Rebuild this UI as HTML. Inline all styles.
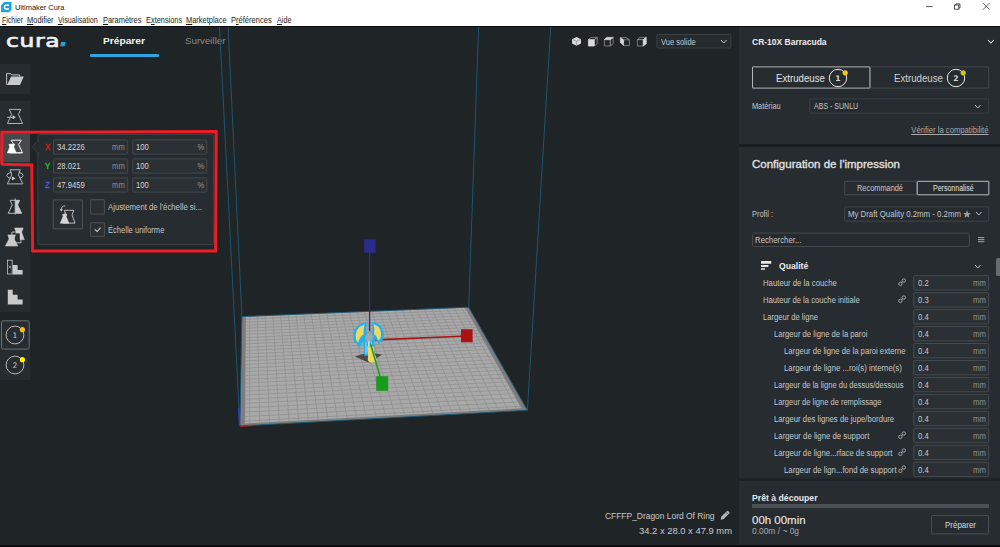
<!DOCTYPE html><html lang="fr"><head><meta charset="utf-8"><title>Ultimaker Cura</title><style>
*{margin:0;padding:0;box-sizing:border-box}
html,body{width:1000px;height:547px;overflow:hidden;background:#1f2427}
body{position:relative;font-family:"Liberation Sans",sans-serif;}
.t{position:absolute;white-space:nowrap;display:inline-block}
.b{position:absolute}
svg{position:absolute;overflow:visible}
u{text-decoration:underline;text-underline-offset:1px;text-decoration-thickness:0.6px}
</style></head><body>
<div class="b" style="left:0.00px;top:0.00px;width:1000.00px;height:26.30px;background:#ffffff;"></div>
<div class="b" style="left:0.00px;top:26.30px;width:1000.00px;height:0.90px;background:#0c0e10;"></div>
<svg style="left:0.8px;top:1.7px" width="10.5" height="10.3" viewBox="0 0 21 20.6"><path d="M6.4 0H21V15.6L16.4 20.6H2.4Q0 20.6 0 18.2V6.6Z" fill="#1da1e4"/><path d="M16.2 6.7H10Q6.9 6.7 6.9 9.8V10.8Q6.9 13.9 10 13.9H16.2" fill="none" stroke="#fff" stroke-width="2.9"/></svg>
<span class="t" style="top:4.00px;font-size:7.9px;line-height:7.9px;color:#1a1a1a;left:14.60px;transform-origin:left center;transform:scaleX(0.9397);">Ultimaker Cura</span>
<svg style="left:920px;top:0" width="80" height="14" viewBox="0 0 80 14"><g stroke="#222" stroke-width="0.75" fill="none"><path d="M6 6.6H12.6"/><rect x="34.6" y="5" width="4.2" height="4.2"/><path d="M35.8 5V3.9H40V8H38.8"/><path d="M63 3.2L69.4 9.6M69.4 3.2L63 9.6"/></g></svg>
<span class="t" style="top:17.00px;font-size:8.2px;line-height:8.2px;color:#1c1c1c;left:2.00px;transform-origin:left center;transform:scaleX(0.8535);"><u>F</u>ichier</span>
<span class="t" style="top:17.00px;font-size:8.2px;line-height:8.2px;color:#1c1c1c;left:27.30px;transform-origin:left center;transform:scaleX(0.9120);"><u>M</u>odifier</span>
<span class="t" style="top:17.00px;font-size:8.2px;line-height:8.2px;color:#1c1c1c;left:58.30px;transform-origin:left center;transform:scaleX(0.8651);"><u>V</u>isualisation</span>
<span class="t" style="top:17.00px;font-size:8.2px;line-height:8.2px;color:#1c1c1c;left:102.50px;transform-origin:left center;transform:scaleX(0.9084);"><u>P</u>aramètres</span>
<span class="t" style="top:17.00px;font-size:8.2px;line-height:8.2px;color:#1c1c1c;left:145.50px;transform-origin:left center;transform:scaleX(0.9025);">E<u>x</u>tensions</span>
<span class="t" style="top:17.00px;font-size:8.2px;line-height:8.2px;color:#1c1c1c;left:185.70px;transform-origin:left center;transform:scaleX(0.9090);"><u>M</u>arketplace</span>
<span class="t" style="top:17.00px;font-size:8.2px;line-height:8.2px;color:#1c1c1c;left:231.00px;transform-origin:left center;transform:scaleX(0.9228);">P<u>r</u>éférences</span>
<span class="t" style="top:17.00px;font-size:8.2px;line-height:8.2px;color:#1c1c1c;left:276.60px;transform-origin:left center;transform:scaleX(0.8774);"><u>A</u>ide</span>
<span class="t" style="left:5.7px;top:29.4px;font-family:'DejaVu Sans',sans-serif;font-weight:400;font-size:17.5px;line-height:24px;color:#f1f1f1;-webkit-text-stroke:0.65px #f1f1f1;letter-spacing:0.5px;transform-origin:left center;transform:scaleX(1.335)">cura</span>
<svg style="left:60px;top:42px" width="6" height="5" viewBox="0 0 6 5"><path d="M1.2 0H5.6L4.6 4.3H0.2Z" fill="#1fa3e6"/></svg>
<span class="t" style="top:36.00px;font-size:9.6px;line-height:9.6px;color:#f4f4f4;font-weight:700;left:103.00px;transform-origin:left center;transform:scaleX(1.0635);">Préparer</span>
<div class="b" style="left:89.50px;top:54.30px;width:69.00px;height:2.40px;background:#2fa2e2;border-radius:1px;"></div>
<span class="t" style="top:36.00px;font-size:9.6px;line-height:9.6px;color:#868a8d;left:184.70px;transform-origin:left center;transform:scaleX(1.0121);">Surveiller</span>
<svg style="left:0;top:0" width="1000" height="547" viewBox="0 0 1000 547"><path d="M219.5 27.0L239.9 426.0" stroke="#1b5a76" stroke-width="0.9" fill="none" /><path d="M228.1 27.0L241.9 316.6" stroke="#1b5a76" stroke-width="0.9" fill="none" /><path d="M478.6 27.0L468.7 307.2" stroke="#1b5a76" stroke-width="0.9" fill="none" /><path d="M550.7 27.0L527.4 410.3" stroke="#1b5a76" stroke-width="0.9" fill="none" /><path d="M241.9 316.6L468.7 307.2L527.4 410.3L239.9 426.0Z" fill="#7d7d7e"/><path d="M245.9 316.8L465.1 307.7L521.4 408.3L245.0 423.4Z" fill="#a9a9aa"/><path d="M249.7 316.6L249.8 423.1M245.8 319.3L466.5 310.1M257.4 316.3L259.7 422.6M245.8 322.2L468.0 312.9M265.2 316.0L269.5 422.0M245.8 325.2L469.6 315.7M272.9 315.7L279.3 421.5M245.8 328.2L471.2 318.5M280.6 315.3L289.1 421.0M245.7 331.2L472.8 321.4M288.3 315.0L298.8 420.4M245.7 334.3L474.5 324.4M296.0 314.7L308.5 419.9M245.7 337.5L476.1 327.3M303.7 314.4L318.2 419.4M245.7 340.7L477.8 330.4M311.3 314.1L327.9 418.9M245.6 343.9L479.5 333.4M319.0 313.7L337.6 418.3M245.6 347.2L481.3 336.6M326.6 313.4L347.2 417.8M245.6 350.5L483.0 339.7M334.2 313.1L356.8 417.3M245.6 353.9L484.8 342.9M341.8 312.8L366.4 416.8M245.5 357.4L486.7 346.2M349.4 312.5L376.0 416.2M245.5 360.9L488.5 349.5M357.0 312.2L385.6 415.7M245.5 364.4L490.4 352.9M364.5 311.9L395.1 415.2M245.4 368.1L492.3 356.3M372.1 311.5L404.6 414.7M245.4 371.7L494.3 359.8M379.6 311.2L414.1 414.2M245.4 375.5L496.2 363.3M387.1 310.9L423.5 413.7M245.3 379.3L498.2 366.9M394.6 310.6L433.0 413.2M245.3 383.1L500.3 370.5M402.1 310.3L442.4 412.6M245.3 387.1L502.4 374.2M409.6 310.0L451.8 412.1M245.2 391.1L504.5 378.0M417.0 309.7L461.1 411.6M245.2 395.1L506.6 381.8M424.5 309.4L470.5 411.1M245.2 399.3L508.8 385.7M431.9 309.1L479.8 410.6M245.1 403.5L511.0 389.7M439.3 308.8L489.1 410.1M245.1 407.8L513.3 393.7M446.7 308.4L498.4 409.6M245.1 412.1L515.6 397.8M454.1 308.1L507.7 409.1M245.0 416.6L517.9 402.0M461.5 307.8L516.9 408.6M245.0 421.1L520.3 406.2" stroke="#8f8f90" stroke-width="0.75" fill="none"/><path d="M241.9 316.6L468.7 307.2L527.4 410.3L239.9 426.0Z" fill="none" stroke="#1b5a76" stroke-width="0.9"/><path d="M240.3 426L253.5 425.3" stroke="#e01818" stroke-width="1.3"/><path d="M239.5 425.8L238.6 408" stroke="#3a3ad0" stroke-width="1.3"/><path d="M354.8 356.4L368 352.4L382.3 354.6L369 362.8Z" fill="#4b4b4c"/><path d="M369.6 252V331" stroke="#2c2c92" stroke-width="1.3"/><rect x="364.1" y="239.3" width="11.5" height="13.4" fill="#2b2b8c"/><path d="M375.2 339.9L461 336.2" stroke="#a31414" stroke-width="1.6"/><rect x="461" y="329.2" width="11.6" height="13.1" fill="#a81414"/><g fill="#1fb2f3" stroke="#1fb2f3" stroke-width="0.5" stroke-linejoin="round"><path d="M366.4 322.8Q360.5 322.6 356.6 327Q352.8 331.4 353.4 337.4Q353.8 341 355.4 343.4L356.6 341.6Q357.4 345.4 359.8 347.6L361.4 343.4Q362.8 340.4 365 339L366.6 334Q365.4 329 366.4 322.8Z"/><path d="M372.2 322.4Q378 322.4 381 326.6Q384 331 383.4 336.4Q383 339.6 381.6 341.8L380.6 340Q380.2 342.6 378.8 344L377.6 341Q376 339.4 373.8 338.6L372.4 334Q373.4 328 372.2 322.4Z"/><path d="M363 339Q369 335.4 374.6 339L373.4 349.6L372.6 355.6H364.6L364.2 349Z"/></g><g fill="#f2d860"><path d="M364.6 324.8Q359.4 326 356.8 330.4Q355 334.4 356 339Q356.6 341.4 358.2 342.6Q359 338.6 361 336.4Q362.4 335 363.6 334.4Q363 329.4 364.6 324.8Z"/><path d="M373.6 324.4Q378.2 325.2 380.2 329.4Q381.8 333.4 380.8 337.2Q380 339.6 377.8 340.4Q377.4 337.4 375.8 335.6Q375 334.8 374.2 334.4Q374.8 329 373.6 324.4Z"/></g><ellipse cx="369" cy="337.8" rx="3.9" ry="4.4" fill="#9eaab1" opacity="0.9"/><path d="M366 342V354M368.6 341.6V348M371.4 342V350" stroke="#8fd6f7" stroke-width="1.1" fill="none"/><path d="M369 341.4V346" stroke="#e8eef1" stroke-width="1.2"/><path d="M367.2 346.6H373.6L374.2 353Q376.8 357 376.4 360.4Q375.4 362.8 371.6 362.6Q368.2 362.4 367.8 359.6Q368.6 355 367.6 352Z" fill="#f2d860"/><path d="M370.4 343.6L380.2 377" stroke="#1e9e1e" stroke-width="1.6"/><rect x="376.2" y="376.2" width="12" height="14.6" fill="#1a9a1c"/></svg>
<div class="b" style="left:0.00px;top:64.00px;width:30.00px;height:29.80px;background:#272c30;"></div>
<div class="b" style="left:0.00px;top:101.30px;width:30.00px;height:211.00px;background:#272c30;"></div>
<div class="b" style="left:0.00px;top:320.00px;width:30.00px;height:60.00px;background:#272c30;"></div>
<div class="b" style="left:0.00px;top:133.60px;width:30.00px;height:28.60px;background:#45494c;"></div>
<svg style="left:0px;top:64px" width="30" height="30" viewBox="0 0 30 30"><path d="M6.6 20.6V9.6H10.6L11.6 10.9H19.6V12.4" fill="none" stroke="#d2d3d4" stroke-width="0.9"/><path d="M11.2 12.6H23.8L20 21H7Z" fill="#c9cacb"/></svg>
<svg style="left:0;top:0" width="32" height="320" viewBox="0 0 32 320"><path d="M9.25 109.4H20.75L18.45 114.48L22.55 123.5H7.45L11.55 114.48Z" fill="none" stroke="#c2c3c4" stroke-width="0.9" stroke-linejoin="round"/><path d="M7.1 117.3H13" stroke="#c2c3c4" stroke-width="0.9"/><path d="M12.6 115.3L15.8 117.3L12.6 119.3Z" fill="#d6d7d8"/><path d="M11.10 140.2H21.30L18.60 144.48L22.50 152.8H9.90L13.80 144.48Z" fill="none" stroke="#f2f2f2" stroke-width="1" stroke-linejoin="round"/><path d="M16.6 152.8H22" stroke="#f2f2f2" stroke-width="1"/><path d="M9.00 144.3H14.60L13.70 146.88L16.20 152.9H7.40L9.90 146.88Z" fill="#ffffff" stroke="#ffffff" stroke-width="0.7" stroke-linejoin="round"/><path d="M10.00 169.8H20.20L18.40 174.88L22.80 183.9H7.40L11.80 174.88Z" fill="none" stroke="#c2c3c4" stroke-width="0.9" stroke-linejoin="round"/><path d="M11.4 172.4Q6.4 173.2 6.8 175.6Q7.2 177.8 10.6 178.3M18.8 172.4Q23.4 173.2 23.1 175.6Q22.8 177.6 20 178.2" fill="none" stroke="#c2c3c4" stroke-width="0.9"/><path d="M12 176.5L15.6 178.4L12 180.3Z" fill="#d6d7d8"/><path d="M10.20 200.3H19.60L17.60 204.98L21.60 213.3H8.20L12.20 204.98Z" fill="none" stroke="#c2c3c4" stroke-width="0.9" stroke-linejoin="round"/><path d="M15.2 200.3H19.6L17.6 205L21.6 213.3H15.2Z" fill="#c9cacb"/><path d="M15.2 198.4V214.6" stroke="#c2c3c4" stroke-width="0.9"/><path d="M14.60 228H23.20L21.60 232.18L24.30 239.6H13.50L16.20 232.18Z" fill="#c9cacb" stroke="#c9cacb" stroke-width="0.6" stroke-linejoin="round"/><path d="M11.9 232H21V242.8H11.9Z" fill="none" stroke="#dcdcdc" stroke-width="0.8"/><path d="M14.6 233.4H19.8V241.6H14.6Z" fill="#272c30"/><path d="M7.90 234.9H15.30L14.10 238.90L17.80 246H5.40L9.10 238.90Z" fill="#c9cacb" stroke="#c9cacb" stroke-width="0.6" stroke-linejoin="round"/><rect x="7.4" y="260.2" width="4.8" height="13.8" fill="none" stroke="#c2c3c4" stroke-width="0.8"/><path d="M8.6 265.8L11 268.2M11 265.8L8.6 268.2" stroke="#c2c3c4" stroke-width="0.7"/><path d="M12.8 265H17.6V270H22.6V274.4H12.8Z" fill="#c9cacb"/><path d="M7.8 289.7H12.7V294.7H17.6V299.6H22.6V304.5H7.8Z" fill="#c9cacb"/></svg>
<svg style="left:0px;top:319px" width="31" height="32" viewBox="0 319 31 32"><rect x="1.50" y="320.80" width="27.70" height="28.30" rx="1.8" fill="none" stroke="#6c7073" stroke-width="1"/></svg>
<svg style="left:3px;top:323px" width="24" height="24" viewBox="-12 -12 24 24"><circle r="8.9" fill="none" stroke="#c4c5c6" stroke-width="0.9"/><circle cx="7.39" cy="-5.34" r="2.6" fill="#fbb81c"/><text x="0" y="2.74" text-anchor="middle" font-family="DejaVu Sans, sans-serif" font-weight="400" font-size="7.6" fill="#c6c7c8">1</text></svg>
<svg style="left:3px;top:353.1px" width="24" height="24" viewBox="-12 -12 24 24"><circle r="8.9" fill="none" stroke="#c4c5c6" stroke-width="0.9"/><circle cx="7.39" cy="-5.34" r="2.6" fill="#fff200"/><text x="0" y="2.74" text-anchor="middle" font-family="DejaVu Sans, sans-serif" font-weight="400" font-size="7.6" fill="#c6c7c8">2</text></svg>
<svg style="left:36px;top:133px" width="180" height="113" viewBox="36 133 180 113"><rect x="37.90" y="134.50" width="175.80" height="110.00" rx="1.2" fill="#272c30" stroke="#3c4145" stroke-width="1"/></svg>
<svg style="left:30.5px;top:140px" width="8" height="14" viewBox="0 0 8 14"><path d="M7.6 0.5L0.8 7L7.6 13.5Z" fill="#272c30" stroke="#3c4145" stroke-width="0.8"/><path d="M7.4 1.6V12.4" stroke="#272c30" stroke-width="1.4"/></svg>
<span class="t" style="top:143.00px;font-size:8.6px;line-height:8.6px;color:#e01a1a;left:45.00px;transform-origin:left center;transform:scaleX(0.9250);-webkit-text-stroke:0.3px #e01a1a;">X</span>
<svg style="left:52px;top:138px" width="78" height="18" viewBox="52 138 78 18"><rect x="53.50" y="139.90" width="74.20" height="14.20" rx="0.9" fill="#2b3034" stroke="#43484b" stroke-width="1"/></svg>
<span class="t" style="top:143.00px;font-size:8.3px;line-height:8.3px;color:#d3d4d5;left:56.60px;transform-origin:left center;transform:scaleX(0.9250);">34.2226</span>
<span class="t" style="top:143.00px;font-size:8.3px;line-height:8.3px;color:#8f9294;right:875.00px;transform-origin:right center;transform:scaleX(0.9250);">mm</span>
<svg style="left:131px;top:138px" width="78" height="18" viewBox="131 138 78 18"><rect x="132.80" y="139.90" width="74.00" height="14.20" rx="0.9" fill="#2b3034" stroke="#43484b" stroke-width="1"/></svg>
<span class="t" style="top:143.00px;font-size:8.3px;line-height:8.3px;color:#d3d4d5;left:135.60px;transform-origin:left center;transform:scaleX(0.9250);">100</span>
<span class="t" style="top:143.00px;font-size:8.3px;line-height:8.3px;color:#96999b;right:795.60px;transform-origin:right center;transform:scaleX(0.9250);">%</span>
<span class="t" style="top:162.00px;font-size:8.6px;line-height:8.6px;color:#1fd01f;left:45.00px;transform-origin:left center;transform:scaleX(0.9250);-webkit-text-stroke:0.3px #1fd01f;">Y</span>
<svg style="left:52px;top:157px" width="78" height="18" viewBox="52 157 78 18"><rect x="53.50" y="158.90" width="74.20" height="14.20" rx="0.9" fill="#2b3034" stroke="#43484b" stroke-width="1"/></svg>
<span class="t" style="top:162.00px;font-size:8.3px;line-height:8.3px;color:#d3d4d5;left:56.60px;transform-origin:left center;transform:scaleX(0.9250);">28.021</span>
<span class="t" style="top:162.00px;font-size:8.3px;line-height:8.3px;color:#8f9294;right:875.00px;transform-origin:right center;transform:scaleX(0.9250);">mm</span>
<svg style="left:131px;top:157px" width="78" height="18" viewBox="131 157 78 18"><rect x="132.80" y="158.90" width="74.00" height="14.20" rx="0.9" fill="#2b3034" stroke="#43484b" stroke-width="1"/></svg>
<span class="t" style="top:162.00px;font-size:8.3px;line-height:8.3px;color:#d3d4d5;left:135.60px;transform-origin:left center;transform:scaleX(0.9250);">100</span>
<span class="t" style="top:162.00px;font-size:8.3px;line-height:8.3px;color:#96999b;right:795.60px;transform-origin:right center;transform:scaleX(0.9250);">%</span>
<span class="t" style="top:181.00px;font-size:8.6px;line-height:8.6px;color:#5656e6;left:45.00px;transform-origin:left center;transform:scaleX(0.9250);-webkit-text-stroke:0.3px #5656e6;">Z</span>
<svg style="left:52px;top:176px" width="78" height="18" viewBox="52 176 78 18"><rect x="53.50" y="177.90" width="74.20" height="14.20" rx="0.9" fill="#2b3034" stroke="#43484b" stroke-width="1"/></svg>
<span class="t" style="top:181.00px;font-size:8.3px;line-height:8.3px;color:#d3d4d5;left:56.60px;transform-origin:left center;transform:scaleX(0.9250);">47.9459</span>
<span class="t" style="top:181.00px;font-size:8.3px;line-height:8.3px;color:#8f9294;right:875.00px;transform-origin:right center;transform:scaleX(0.9250);">mm</span>
<svg style="left:131px;top:176px" width="78" height="18" viewBox="131 176 78 18"><rect x="132.80" y="177.90" width="74.00" height="14.20" rx="0.9" fill="#2b3034" stroke="#43484b" stroke-width="1"/></svg>
<span class="t" style="top:181.00px;font-size:8.3px;line-height:8.3px;color:#d3d4d5;left:135.60px;transform-origin:left center;transform:scaleX(0.9250);">100</span>
<span class="t" style="top:181.00px;font-size:8.3px;line-height:8.3px;color:#96999b;right:795.60px;transform-origin:right center;transform:scaleX(0.9250);">%</span>
<svg style="left:51px;top:198px" width="33" height="33" viewBox="51 198 33 33"><rect x="53.20" y="199.90" width="29.30" height="28.90" rx="0.4" fill="#2a2f33" stroke="#4d5155" stroke-width="1"/></svg>
<svg style="left:89px;top:198px" width="17" height="18" viewBox="89 198 17 18"><rect x="90.60" y="199.70" width="13.80" height="14.40" rx="0.4" fill="#2a2f33" stroke="#4d5155" stroke-width="1"/></svg>
<svg style="left:89px;top:221px" width="17" height="17" viewBox="89 221 17 17"><rect x="90.60" y="222.70" width="13.80" height="13.60" rx="0.4" fill="#2a2f33" stroke="#4d5155" stroke-width="1"/></svg>
<svg style="left:0;top:0" width="120" height="250" viewBox="0 0 120 250"><path d="M64.35 210.3H73.85L72.00 214.91L75.00 223.1H63.20L66.20 214.91Z" fill="none" stroke="#d2d3d4" stroke-width="0.85" stroke-linejoin="round"/><path d="M62.50 214.3H66.70L66.10 216.53L68.90 223.2H60.30L63.10 216.53Z" fill="#d6d7d8" stroke="#d6d7d8" stroke-width="0.6" stroke-linejoin="round"/><path d="M64.9 212.4V214.6" stroke="#d6d7d8" stroke-width="0.8"/><path d="M65.2 205.9Q61.4 205.6 61.3 209.6" fill="none" stroke="#d2d3d4" stroke-width="0.85"/><path d="M59.7 209.2L61.3 211.6L62.9 209.2Z" fill="#d6d7d8"/><path d="M94.7 229.4L97.1 231.5L100.6 227.6" fill="none" stroke="#d0d1d2" stroke-width="1.1"/></svg>
<span class="t" style="top:203.00px;font-size:8.3px;line-height:8.3px;color:#c4c5c6;left:107.80px;transform-origin:left center;transform:scaleX(0.9370);">Ajustement de l'échelle si...</span>
<span class="t" style="top:226.00px;font-size:8.3px;line-height:8.3px;color:#c4c5c6;left:107.80px;transform-origin:left center;transform:scaleX(0.9123);">Échelle uniforme</span>
<svg style="left:571.5px;top:36.6px" width="10" height="10" viewBox="0 0 10 10"><path d="M4.5 0L9 2.2V6.6L4.5 8.8L0 6.6V2.2Z" fill="#d8d9da"/><path d="M0.5 2.4L4.5 4.3L8.5 2.4M4.5 4.3V8.4" stroke="#8a8d8f" stroke-width="0.7" fill="none"/></svg>
<svg style="left:587.7px;top:36.7px" width="10" height="10" viewBox="0 0 10 10"><path d="M0.4 2.6H6.3V9H0.4ZM0.4 2.6L3 0.4H9.2L6.3 2.6ZM6.3 2.6L9.2 0.4V6.8L6.3 9Z" fill="none" stroke="#8d8f91" stroke-width="0.8" stroke-linejoin="round"/><path d="M0.4 2.6H6.3V9H0.4Z" fill="#d8d9da" stroke="#d8d9da" stroke-width="0.5" stroke-linejoin="round"/></svg>
<svg style="left:603.9px;top:36.7px" width="10" height="10" viewBox="0 0 10 10"><path d="M0.4 2.6H6.3V9H0.4ZM0.4 2.6L3 0.4H9.2L6.3 2.6ZM6.3 2.6L9.2 0.4V6.8L6.3 9Z" fill="none" stroke="#8d8f91" stroke-width="0.8" stroke-linejoin="round"/><path d="M0.4 2.6L3 0.4H9.2L6.3 2.6Z" fill="#d8d9da" stroke="#d8d9da" stroke-width="0.5" stroke-linejoin="round"/></svg>
<svg style="left:620px;top:36.9px" width="10" height="10" viewBox="0 0 10 10"><path d="M3.6 2.8H9.4V8.6H3.6ZM0.3 0.6H6.2L9.4 2.8" fill="none" stroke="#8d8f91" stroke-width="0.8" stroke-linejoin="round"/><path d="M0.3 0.6L3.6 2.8V8.6L0.3 5.6Z" fill="#d8d9da" stroke="#d8d9da" stroke-width="0.5" stroke-linejoin="round"/></svg>
<svg style="left:636.6px;top:36.7px" width="10" height="10" viewBox="0 0 10 10"><path d="M0.4 2.6H6.3V9H0.4ZM0.4 2.6L3 0.4H9.2L6.3 2.6ZM6.3 2.6L9.2 0.4V6.8L6.3 9Z" fill="none" stroke="#8d8f91" stroke-width="0.8" stroke-linejoin="round"/><path d="M6.3 2.6L9.2 0.4V6.8L6.3 9Z" fill="#d8d9da" stroke="#d8d9da" stroke-width="0.5" stroke-linejoin="round"/></svg>
<svg style="left:655px;top:33px" width="78" height="17" viewBox="655 33 78 17"><rect x="656.90" y="34.50" width="74.00" height="13.50" rx="1.2" fill="#262b2f" stroke="#3b4044" stroke-width="1"/></svg>
<span class="t" style="top:38.00px;font-size:8.3px;line-height:8.3px;color:#c4c5c6;left:660.60px;transform-origin:left center;transform:scaleX(0.9050);">Vue solide</span>
<svg style="left:719.6px;top:38.7px" width="7.6" height="5" viewBox="-1 -1 7.6 5"><path d="M0 0L2.8 3L5.6 0" fill="none" stroke="#c9cacb" stroke-width="0.95"/></svg>
<div class="b" style="left:739.00px;top:27.20px;width:261.00px;height:116.60px;background:#272c30;"></div>
<div class="b" style="left:739.00px;top:143.80px;width:261.00px;height:3.40px;background:#1b1f22;"></div>
<div class="b" style="left:739.00px;top:147.20px;width:261.00px;height:332.00px;background:#272c30;"></div>
<div class="b" style="left:739.00px;top:477.20px;width:261.00px;height:6.00px;background:linear-gradient(#272c30,#1c2023 50%,#272c30);"></div>
<div class="b" style="left:739.00px;top:480.80px;width:261.00px;height:64.00px;background:#272c30;"></div>
<div class="b" style="left:0.00px;top:544.60px;width:1000.00px;height:2.40px;background:#0a0b0c;"></div>
<span class="t" style="top:38.00px;font-size:9px;line-height:9px;color:#eeeeee;font-weight:700;left:752.00px;transform-origin:left center;transform:scaleX(0.9439);">CR-10X Barracuda</span>
<svg style="left:987.1px;top:39.050000000000004px" width="7.8" height="5.1" viewBox="-1 -1 7.8 5.1"><path d="M0 0L2.9 3.1L5.8 0" fill="none" stroke="#dedede" stroke-width="1.05"/></svg>
<svg style="left:869px;top:65px" width="122" height="25" viewBox="869 65 122 25"><rect x="870.50" y="66.90" width="118.20" height="21.20" rx="0.3" fill="none" stroke="#44494c" stroke-width="1"/></svg>
<svg style="left:751px;top:65px" width="121" height="25" viewBox="751 65 121 25"><rect x="752.50" y="66.90" width="117.40" height="21.20" rx="0.3" fill="none" stroke="#b4b5b6" stroke-width="1"/></svg>
<span class="t" style="top:73.00px;font-size:10.9px;line-height:10.9px;color:#e2e3e4;left:775.60px;transform-origin:left center;transform:scaleX(0.8886);">Extrudeuse</span>
<span class="t" style="top:73.00px;font-size:10.9px;line-height:10.9px;color:#d0d1d2;left:894.40px;transform-origin:left center;transform:scaleX(0.8886);">Extrudeuse</span>
<svg style="left:825.7px;top:65.9px" width="24" height="24" viewBox="-12 -12 24 24"><circle r="8.7" fill="none" stroke="#e6e6e6" stroke-width="1"/><circle cx="7.22" cy="-5.22" r="2.6" fill="#fbc31d"/><text x="0" y="2.74" text-anchor="middle" font-family="DejaVu Sans, sans-serif" font-weight="700" font-size="7.6" fill="#d6d7d8">1</text></svg>
<svg style="left:944.4px;top:65.9px" width="24" height="24" viewBox="-12 -12 24 24"><circle r="8.7" fill="none" stroke="#e6e6e6" stroke-width="1"/><circle cx="7.22" cy="-5.22" r="2.6" fill="#c8c81c"/><text x="0" y="2.74" text-anchor="middle" font-family="DejaVu Sans, sans-serif" font-weight="700" font-size="7.6" fill="#d6d7d8">2</text></svg>
<span class="t" style="top:102.00px;font-size:8.3px;line-height:8.3px;color:#c4c5c6;left:752.00px;transform-origin:left center;transform:scaleX(0.8856);">Matériau</span>
<svg style="left:808px;top:97px" width="183" height="18" viewBox="808 97 183 18"><rect x="809.70" y="98.90" width="179.00" height="14.20" rx="1.2" fill="#262b2f" stroke="#3a3e42" stroke-width="1"/></svg>
<span class="t" style="top:102.00px;font-size:8.3px;line-height:8.3px;color:#c4c5c6;left:813.70px;transform-origin:left center;transform:scaleX(0.8480);">ABS - SUNLU</span>
<svg style="left:974.2px;top:103.5px" width="7.6" height="5" viewBox="-1 -1 7.6 5"><path d="M0 0L2.8 3L5.6 0" fill="none" stroke="#c9cacb" stroke-width="0.95"/></svg>
<span class="t" style="top:126.00px;font-size:8.3px;line-height:8.3px;color:#a9abad;right:11.20px;transform-origin:right center;transform:scaleX(0.9250);text-decoration:underline;text-underline-offset:1px;text-decoration-thickness:0.6px;">Vérifier la compatibilité</span>
<span class="t" style="top:159.00px;font-size:11px;line-height:11px;color:#e4e5e6;left:752.00px;transform-origin:left center;transform:scaleX(1.0459);-webkit-text-stroke:0.3px #e0e1e2;">Configuration de l'impression</span>
<svg style="left:843px;top:179px" width="75" height="18" viewBox="843 179 75 18"><rect x="844.70" y="181.30" width="71.80" height="13.50" rx="0.3" fill="none" stroke="#484d50" stroke-width="1"/></svg>
<svg style="left:915px;top:179px" width="76" height="18" viewBox="915 179 76 18"><rect x="917.30" y="181.30" width="71.50" height="13.50" rx="0.3" fill="none" stroke="#b9babb" stroke-width="1"/></svg>
<span class="t" style="top:184.00px;font-size:8.3px;line-height:8.3px;color:#c9cacb;left:857.20px;transform-origin:left center;transform:scaleX(0.8903);">Recommandé</span>
<span class="t" style="top:184.00px;font-size:8.3px;line-height:8.3px;color:#e0e1e2;left:932.80px;transform-origin:left center;transform:scaleX(0.8461);">Personnalisé</span>
<span class="t" style="top:210.00px;font-size:8.3px;line-height:8.3px;color:#c4c5c6;left:752.00px;transform-origin:left center;transform:scaleX(0.8928);">Profil :</span>
<svg style="left:843px;top:205px" width="148" height="18" viewBox="843 205 148 18"><rect x="844.70" y="206.90" width="144.00" height="14.30" rx="1.2" fill="#262b2f" stroke="#3f4448" stroke-width="1"/></svg>
<span class="t" style="top:210.00px;font-size:8.3px;line-height:8.3px;color:#c4c5c6;left:847.60px;transform-origin:left center;transform:scaleX(0.9424);">My Draft Quality 0.2mm - 0.2mm</span>
<svg style="left:963.4px;top:209.6px" width="8" height="8" viewBox="0 0 10 10"><path d="M5 0.4L6.4 3.6L9.8 3.9L7.2 6.2L8 9.6L5 7.8L2 9.6L2.8 6.2L0.2 3.9L3.6 3.6Z" fill="#9a9c9e"/></svg>
<svg style="left:974.6px;top:211.3px" width="7.6" height="5" viewBox="-1 -1 7.6 5"><path d="M0 0L2.8 3L5.6 0" fill="none" stroke="#c9cacb" stroke-width="0.95"/></svg>
<svg style="left:751px;top:231px" width="220" height="17" viewBox="751 231 220 17"><rect x="752.50" y="233.10" width="216.80" height="13.40" rx="1.2" fill="#262b2f" stroke="#45494d" stroke-width="1"/></svg>
<span class="t" style="top:236.00px;font-size:8.3px;line-height:8.3px;color:#c4c5c6;left:755.00px;transform-origin:left center;transform:scaleX(0.9400);">Rechercher...</span>
<svg style="left:978.4px;top:237px" width="6.4" height="6" viewBox="0 0 6.4 6"><path d="M0 0.6H6.4M0 2.65H6.4M0 4.7H6.4" stroke="#bcbebf" stroke-width="0.85"/></svg>
<svg style="left:760.6px;top:260.8px" width="11" height="10" viewBox="0 0 11 10"><path d="M0 0H10.2V2.8H0Z M0 4H7.4V6H0Z M0 7.2H4V8.8H0Z" fill="#e8e8e8"/></svg>
<span class="t" style="top:262.00px;font-size:8.4px;line-height:8.4px;color:#eaeaea;font-weight:700;left:779.20px;transform-origin:left center;transform:scaleX(1.0325);">Qualité</span>
<svg style="left:974.4000000000001px;top:263.9px" width="7.6" height="5" viewBox="-1 -1 7.6 5"><path d="M0 0L2.8 3L5.6 0" fill="none" stroke="#c9cacb" stroke-width="0.95"/></svg>
<div class="b" style="left:995.80px;top:257.60px;width:4.20px;height:18.40px;background:#666b6f;border-radius:1.5px 0 0 1.5px;"></div>
<span class="t" style="top:279.00px;font-size:8.3px;line-height:8.3px;color:#c6c7c8;left:763.30px;transform-origin:left center;transform:scaleX(0.9353);">Hauteur de la couche</span>
<svg style="left:912px;top:274px" width="79" height="18" viewBox="912 274 79 18"><rect x="913.70" y="275.65" width="75.00" height="14.40" rx="1.1" fill="#2b3034" stroke="#464b4f" stroke-width="1"/></svg>
<span class="t" style="top:279.00px;font-size:8.3px;line-height:8.3px;color:#c8c9ca;left:917.60px;transform-origin:left center;transform:scaleX(0.9250);">0.2</span>
<span class="t" style="top:279.00px;font-size:8.3px;line-height:8.3px;color:#8f9294;right:14.60px;transform-origin:right center;transform:scaleX(0.9250);">mm</span>
<svg style="left:898.1px;top:278.45000000000005px" width="8.2" height="8.4" viewBox="0 0 8.2 8.4"><g fill="none" stroke="#a4a6a8" stroke-width="0.95"><circle cx="2.4" cy="5.9" r="1.7"/><circle cx="5.8" cy="2.5" r="1.7"/><path d="M3.2 5.1L5 3.3"/></g></svg>
<span class="t" style="top:296.00px;font-size:8.3px;line-height:8.3px;color:#c6c7c8;left:763.30px;transform-origin:left center;transform:scaleX(0.9242);">Hauteur de la couche initiale</span>
<svg style="left:912px;top:291px" width="79" height="18" viewBox="912 291 79 18"><rect x="913.70" y="292.61" width="75.00" height="14.40" rx="1.1" fill="#2b3034" stroke="#464b4f" stroke-width="1"/></svg>
<span class="t" style="top:296.00px;font-size:8.3px;line-height:8.3px;color:#c8c9ca;left:917.60px;transform-origin:left center;transform:scaleX(0.9250);">0.3</span>
<span class="t" style="top:296.00px;font-size:8.3px;line-height:8.3px;color:#8f9294;right:14.60px;transform-origin:right center;transform:scaleX(0.9250);">mm</span>
<svg style="left:898.1px;top:295.41px" width="8.2" height="8.4" viewBox="0 0 8.2 8.4"><g fill="none" stroke="#a4a6a8" stroke-width="0.95"><circle cx="2.4" cy="5.9" r="1.7"/><circle cx="5.8" cy="2.5" r="1.7"/><path d="M3.2 5.1L5 3.3"/></g></svg>
<span class="t" style="top:313.00px;font-size:8.3px;line-height:8.3px;color:#c6c7c8;left:763.30px;transform-origin:left center;transform:scaleX(0.9151);">Largeur de ligne</span>
<svg style="left:912px;top:308px" width="79" height="18" viewBox="912 308 79 18"><rect x="913.70" y="309.57" width="75.00" height="14.40" rx="1.1" fill="#2b3034" stroke="#464b4f" stroke-width="1"/></svg>
<span class="t" style="top:313.00px;font-size:8.3px;line-height:8.3px;color:#c8c9ca;left:917.60px;transform-origin:left center;transform:scaleX(0.9250);">0.4</span>
<span class="t" style="top:313.00px;font-size:8.3px;line-height:8.3px;color:#8f9294;right:14.60px;transform-origin:right center;transform:scaleX(0.9250);">mm</span>
<span class="t" style="top:330.00px;font-size:8.3px;line-height:8.3px;color:#c6c7c8;left:773.80px;transform-origin:left center;transform:scaleX(0.9242);">Largeur de ligne de la paroi</span>
<svg style="left:912px;top:325px" width="79" height="18" viewBox="912 325 79 18"><rect x="913.70" y="326.53" width="75.00" height="14.40" rx="1.1" fill="#2b3034" stroke="#464b4f" stroke-width="1"/></svg>
<span class="t" style="top:330.00px;font-size:8.3px;line-height:8.3px;color:#c8c9ca;left:917.60px;transform-origin:left center;transform:scaleX(0.9250);">0.4</span>
<span class="t" style="top:330.00px;font-size:8.3px;line-height:8.3px;color:#8f9294;right:14.60px;transform-origin:right center;transform:scaleX(0.9250);">mm</span>
<span class="t" style="top:347.00px;font-size:8.3px;line-height:8.3px;color:#c6c7c8;left:784.30px;transform-origin:left center;transform:scaleX(0.9279);">Largeur de ligne de la paroi externe</span>
<svg style="left:912px;top:341px" width="79" height="19" viewBox="912 341 79 19"><rect x="913.70" y="343.49" width="75.00" height="14.40" rx="1.1" fill="#2b3034" stroke="#464b4f" stroke-width="1"/></svg>
<span class="t" style="top:347.00px;font-size:8.3px;line-height:8.3px;color:#c8c9ca;left:917.60px;transform-origin:left center;transform:scaleX(0.9250);">0.4</span>
<span class="t" style="top:347.00px;font-size:8.3px;line-height:8.3px;color:#8f9294;right:14.60px;transform-origin:right center;transform:scaleX(0.9250);">mm</span>
<span class="t" style="top:364.00px;font-size:8.3px;line-height:8.3px;color:#c6c7c8;left:784.30px;transform-origin:left center;transform:scaleX(0.9396);">Largeur de ligne ...roi(s) interne(s)</span>
<svg style="left:912px;top:358px" width="79" height="19" viewBox="912 358 79 19"><rect x="913.70" y="360.45" width="75.00" height="14.40" rx="1.1" fill="#2b3034" stroke="#464b4f" stroke-width="1"/></svg>
<span class="t" style="top:364.00px;font-size:8.3px;line-height:8.3px;color:#c8c9ca;left:917.60px;transform-origin:left center;transform:scaleX(0.9250);">0.4</span>
<span class="t" style="top:364.00px;font-size:8.3px;line-height:8.3px;color:#8f9294;right:14.60px;transform-origin:right center;transform:scaleX(0.9250);">mm</span>
<span class="t" style="top:381.00px;font-size:8.3px;line-height:8.3px;color:#c6c7c8;left:773.80px;transform-origin:left center;transform:scaleX(0.9112);">Largeur de la ligne du dessus/dessous</span>
<svg style="left:912px;top:375px" width="79" height="19" viewBox="912 375 79 19"><rect x="913.70" y="377.41" width="75.00" height="14.40" rx="1.1" fill="#2b3034" stroke="#464b4f" stroke-width="1"/></svg>
<span class="t" style="top:381.00px;font-size:8.3px;line-height:8.3px;color:#c8c9ca;left:917.60px;transform-origin:left center;transform:scaleX(0.9250);">0.4</span>
<span class="t" style="top:381.00px;font-size:8.3px;line-height:8.3px;color:#8f9294;right:14.60px;transform-origin:right center;transform:scaleX(0.9250);">mm</span>
<span class="t" style="top:398.00px;font-size:8.3px;line-height:8.3px;color:#c6c7c8;left:773.80px;transform-origin:left center;transform:scaleX(0.9065);">Largeur de ligne de remplissage</span>
<svg style="left:912px;top:392px" width="79" height="19" viewBox="912 392 79 19"><rect x="913.70" y="394.37" width="75.00" height="14.40" rx="1.1" fill="#2b3034" stroke="#464b4f" stroke-width="1"/></svg>
<span class="t" style="top:398.00px;font-size:8.3px;line-height:8.3px;color:#c8c9ca;left:917.60px;transform-origin:left center;transform:scaleX(0.9250);">0.4</span>
<span class="t" style="top:398.00px;font-size:8.3px;line-height:8.3px;color:#8f9294;right:14.60px;transform-origin:right center;transform:scaleX(0.9250);">mm</span>
<span class="t" style="top:415.00px;font-size:8.3px;line-height:8.3px;color:#c6c7c8;left:773.80px;transform-origin:left center;transform:scaleX(0.9336);">Largeur des lignes de jupe/bordure</span>
<svg style="left:912px;top:409px" width="79" height="19" viewBox="912 409 79 19"><rect x="913.70" y="411.33" width="75.00" height="14.40" rx="1.1" fill="#2b3034" stroke="#464b4f" stroke-width="1"/></svg>
<span class="t" style="top:415.00px;font-size:8.3px;line-height:8.3px;color:#c8c9ca;left:917.60px;transform-origin:left center;transform:scaleX(0.9250);">0.4</span>
<span class="t" style="top:415.00px;font-size:8.3px;line-height:8.3px;color:#8f9294;right:14.60px;transform-origin:right center;transform:scaleX(0.9250);">mm</span>
<span class="t" style="top:432.00px;font-size:8.3px;line-height:8.3px;color:#c6c7c8;left:773.80px;transform-origin:left center;transform:scaleX(0.9397);">Largeur de ligne de support</span>
<svg style="left:912px;top:426px" width="79" height="19" viewBox="912 426 79 19"><rect x="913.70" y="428.29" width="75.00" height="14.40" rx="1.1" fill="#2b3034" stroke="#464b4f" stroke-width="1"/></svg>
<span class="t" style="top:432.00px;font-size:8.3px;line-height:8.3px;color:#c8c9ca;left:917.60px;transform-origin:left center;transform:scaleX(0.9250);">0.4</span>
<span class="t" style="top:432.00px;font-size:8.3px;line-height:8.3px;color:#8f9294;right:14.60px;transform-origin:right center;transform:scaleX(0.9250);">mm</span>
<svg style="left:898.1px;top:431.09000000000003px" width="8.2" height="8.4" viewBox="0 0 8.2 8.4"><g fill="none" stroke="#a4a6a8" stroke-width="0.95"><circle cx="2.4" cy="5.9" r="1.7"/><circle cx="5.8" cy="2.5" r="1.7"/><path d="M3.2 5.1L5 3.3"/></g></svg>
<span class="t" style="top:449.00px;font-size:8.3px;line-height:8.3px;color:#c6c7c8;left:773.80px;transform-origin:left center;transform:scaleX(0.9339);">Largeur de ligne...rface de support</span>
<svg style="left:912px;top:443px" width="79" height="19" viewBox="912 443 79 19"><rect x="913.70" y="445.25" width="75.00" height="14.40" rx="1.1" fill="#2b3034" stroke="#464b4f" stroke-width="1"/></svg>
<span class="t" style="top:449.00px;font-size:8.3px;line-height:8.3px;color:#c8c9ca;left:917.60px;transform-origin:left center;transform:scaleX(0.9250);">0.4</span>
<span class="t" style="top:449.00px;font-size:8.3px;line-height:8.3px;color:#8f9294;right:14.60px;transform-origin:right center;transform:scaleX(0.9250);">mm</span>
<svg style="left:898.1px;top:448.05000000000007px" width="8.2" height="8.4" viewBox="0 0 8.2 8.4"><g fill="none" stroke="#a4a6a8" stroke-width="0.95"><circle cx="2.4" cy="5.9" r="1.7"/><circle cx="5.8" cy="2.5" r="1.7"/><path d="M3.2 5.1L5 3.3"/></g></svg>
<span class="t" style="top:466.00px;font-size:8.3px;line-height:8.3px;color:#c6c7c8;left:784.30px;transform-origin:left center;transform:scaleX(0.9385);">Largeur de lign...fond de support</span>
<svg style="left:912px;top:460px" width="79" height="19" viewBox="912 460 79 19"><rect x="913.70" y="462.21" width="75.00" height="14.40" rx="1.1" fill="#2b3034" stroke="#464b4f" stroke-width="1"/></svg>
<span class="t" style="top:466.00px;font-size:8.3px;line-height:8.3px;color:#c8c9ca;left:917.60px;transform-origin:left center;transform:scaleX(0.9250);">0.4</span>
<span class="t" style="top:466.00px;font-size:8.3px;line-height:8.3px;color:#8f9294;right:14.60px;transform-origin:right center;transform:scaleX(0.9250);">mm</span>
<svg style="left:898.1px;top:465.01000000000005px" width="8.2" height="8.4" viewBox="0 0 8.2 8.4"><g fill="none" stroke="#a4a6a8" stroke-width="0.95"><circle cx="2.4" cy="5.9" r="1.7"/><circle cx="5.8" cy="2.5" r="1.7"/><path d="M3.2 5.1L5 3.3"/></g></svg>
<span class="t" style="top:494.00px;font-size:8.3px;line-height:8.3px;color:#e6e7e8;font-weight:700;left:752.20px;transform-origin:left center;transform:scaleX(1.0457);">Prêt à découper</span>
<div class="b" style="left:752.00px;top:504.30px;width:236.80px;height:3.40px;background:#4b5054;"></div>
<span class="t" style="top:516.00px;font-size:10.3px;line-height:10.3px;color:#e6e6e6;left:752.00px;transform-origin:left center;transform:scaleX(1.1143);-webkit-text-stroke:0.12px #e6e6e6;">00h 00min</span>
<span class="t" style="top:527.00px;font-size:8.3px;line-height:8.3px;color:#a9abad;left:752.20px;transform-origin:left center;transform:scaleX(1.0135);">0.00m / ~ 0g</span>
<svg style="left:930px;top:514px" width="60" height="22" viewBox="930 514 60 22"><rect x="931.70" y="515.60" width="56.80" height="18.30" rx="0.4" fill="#262b2f" stroke="#494e52" stroke-width="1"/></svg>
<span class="t" style="top:521.00px;font-size:8.3px;line-height:8.3px;color:#dadbdc;left:944.60px;transform-origin:left center;transform:scaleX(0.9599);">Préparer</span>
<span class="t" style="top:512.00px;font-size:8.3px;line-height:8.3px;color:#c9cacb;left:605.40px;transform-origin:left center;transform:scaleX(1.0153);">CFFFP_Dragon Lord Of Ring</span>
<svg style="left:720.4px;top:510.4px" width="10.4" height="10.4" viewBox="0 0 10.4 10.4"><path d="M0.6 9.8L1.4 6.6L6.8 1.2Q7.6 0.4 8.4 1.2L9.2 2Q10 2.8 9.2 3.6L3.8 9Z" fill="#b4b6b7"/><path d="M6.2 2.4L8 4.2" stroke="#1f2427" stroke-width="0.6"/></svg>
<span class="t" style="top:527.00px;font-size:8.3px;line-height:8.3px;color:#c9cacb;left:639.00px;transform-origin:left center;transform:scaleX(1.1325);">34.2 x 28.0 x 47.9 mm</span>
<svg style="left:0;top:0" width="260" height="270" viewBox="0 0 260 270"><path d="M1.8 164.6L1.9 132.3L110 131.9L217 131.6 M216.2 130.4L215.6 251.2 M217 250.9L32 250.9 M32.6 252L32.2 208L31.7 164.9 M33 164.9L1 164.3" fill="none" stroke="#ee1c25" stroke-width="3" stroke-linecap="butt"/></svg>
</body></html>
